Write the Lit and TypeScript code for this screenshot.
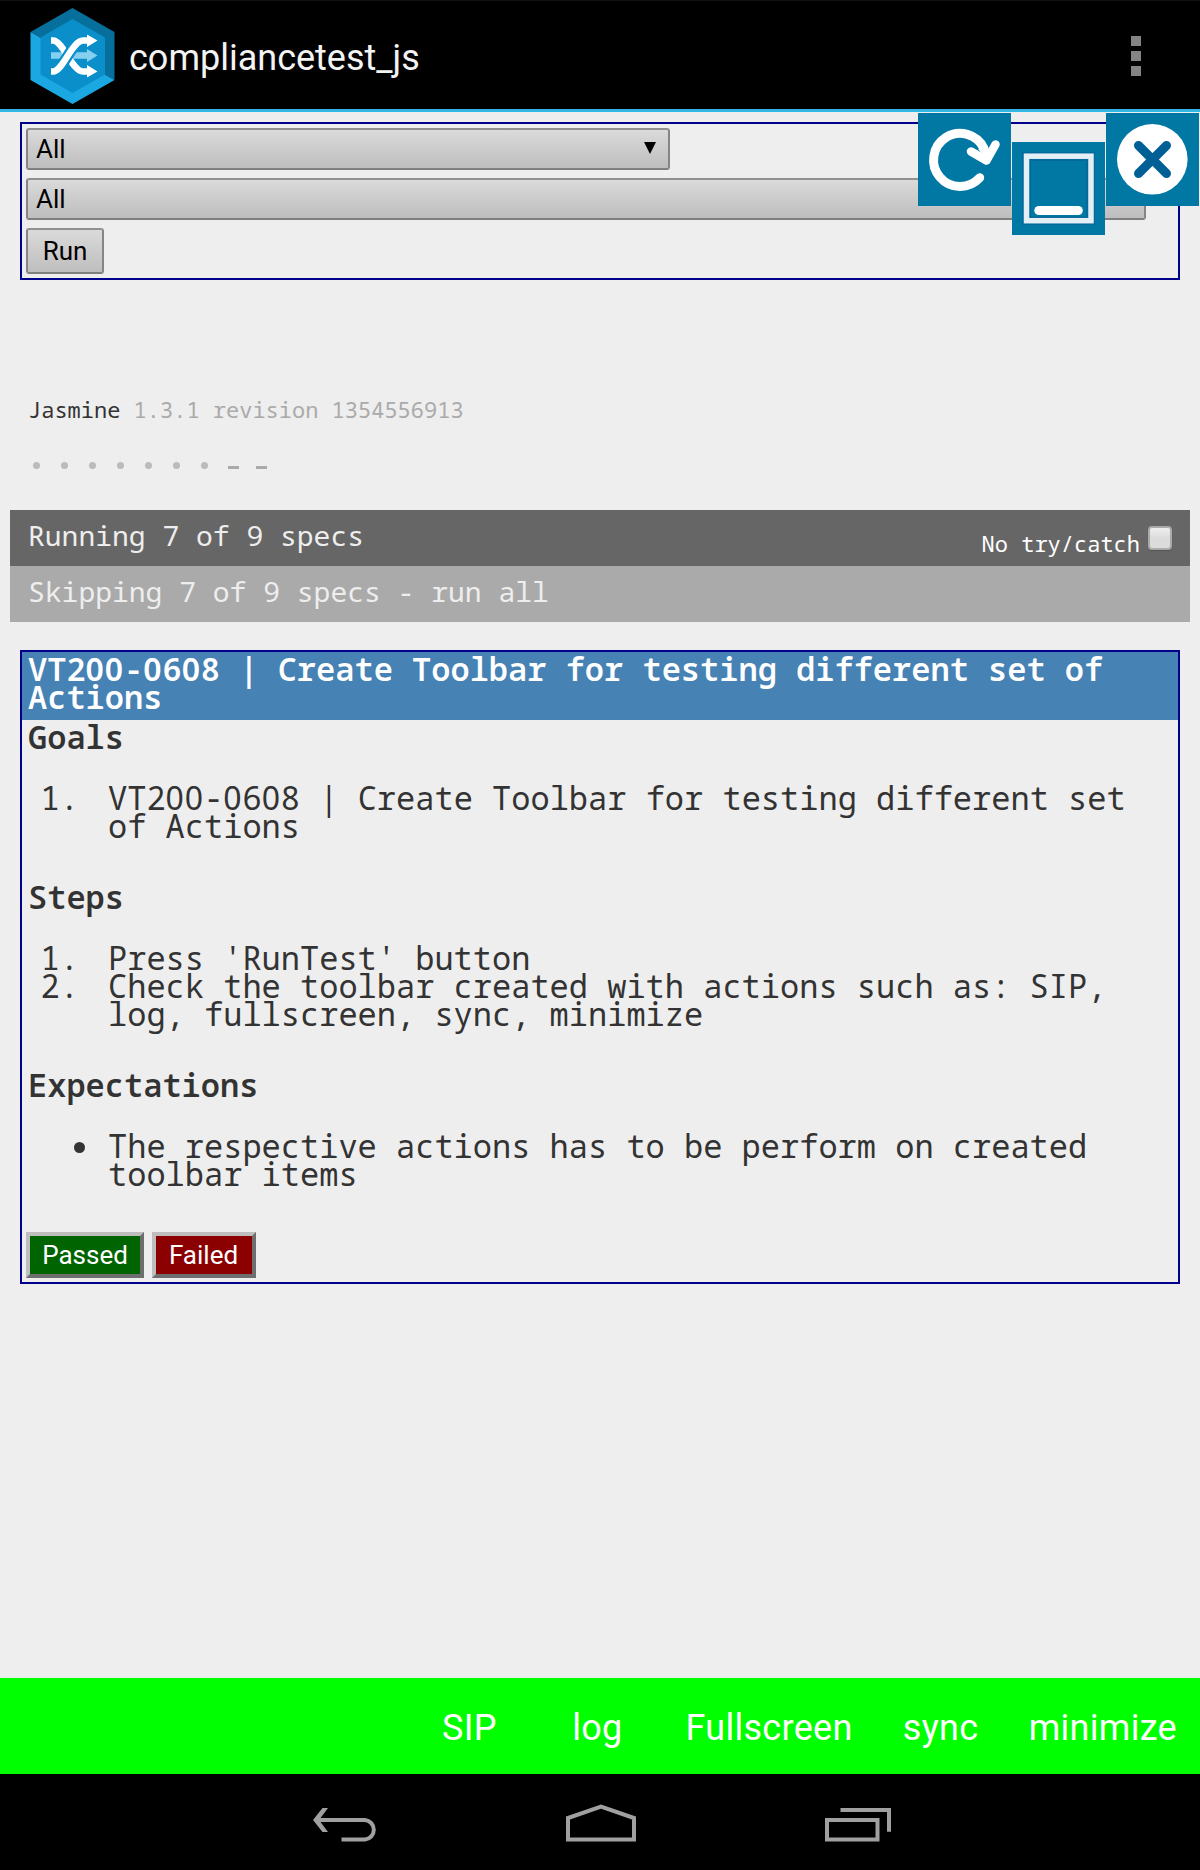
import { LitElement, html, css, svg } from "lit";
import { customElement } from "lit/decorators.js";

const TOOLBAR = ["SIP", "log", "Fullscreen", "sync", "minimize"];

/** Swaps the slashed zero of the mono face for a plain one of equal width. */
const mono = (text: string) =>
  text.split(/(0+)/).map((part) => (part.startsWith("0") ? html`<span class="zero">${part}</span>` : part));

const logo = svg`
  <polygon points="41.5,0 83.5,24 83.5,72 41.5,48 -0.5,24" fill="#066f9c"/>
  <polygon points="-0.5,24 41.5,48 83.5,72 41.5,96 -0.5,72" fill="#1ba8e2"/>
  <polygon points="41.5,11 74,29.5 74,66.5 41.5,85 9.5,66.5 9.5,29.5" fill="#0a8fca"/>
  <path d="M20 47.5h37" stroke="#85cff0" stroke-width="6.500"/>
  <path d="M56 41l10.500 6.500L56 54z" fill="#85cff0"/>
  <path d="M20 32.500h2c10 0 19 31 30 31h5" stroke="#fff" stroke-width="6.500" fill="none"/>
  <path d="M22 63.500c10 0 19-31 30-31" stroke="#0a8fca" stroke-width="11" fill="none"/>
  <path d="M20 63.500h2c10 0 19-31 30-31h5" stroke="#fff" stroke-width="6.500" fill="none"/>
  <path d="M56 26.500l10.500 6L56 39zM56 57l10.500 6.500L56 69.500z" fill="#fff"/>`;

@customElement("app-root")
export class AppRoot extends LitElement {
  static styles = css`
    :host {
      display: flex;
      flex-direction: column;
      position: relative;
      width: 1200px;
      height: 1870px;
      overflow: hidden;
      background: #eee;
      color: #333;
      font-family: "Noto Sans Mono", "DejaVu Sans Mono", monospace;
    }
    * { box-sizing: border-box; }
    svg { display: block; }
    .header {
      flex: none;
      display: flex;
      height: 112px;
      padding: 7px 59px 0 31px;
      background: #000;
      border-bottom: 3px solid #33b5e5;
      border-top: 1px solid #111;
    }
    .logo { overflow: visible; }
    .title {
      flex: 1;
      margin-left: 15px;
      color: #f3f3f3;
      font: 36px/100px Roboto, sans-serif;
    }
    .dots { display: flex; flex-direction: column; gap: 5px; padding-top: 28px; }
    .dots i { width: 10px; height: 10px; background: #848484; }
    .content { flex: 1; display: flex; flex-direction: column; padding: 10px 20px 0; }
    .filters {
      flex: none;
      display: flex;
      flex-direction: column;
      align-items: flex-start;
      height: 158px;
      padding: 4px;
      border: 2px solid #00008b;
      font-family: Roboto, sans-serif;
      font-size: 26px;
      color: #000;
    }
    .control {
      flex: none;
      display: flex;
      align-items: center;
      justify-content: space-between;
      height: 42px;
      margin-bottom: 8px;
      padding: 0 12px 0 8px;
      border: 2px solid;
      border-color: #909090 #858585 #7f7f7f;
      border-radius: 3px;
      background: linear-gradient(#dadada, #bebebe);
    }
    .short { width: 644px; }
    .long { width: 1120px; }
    .run { width: 78px; height: 46px; padding: 0; justify-content: center; }
    .arrow { margin-bottom: 3px; }
    .banner { margin: 114px 0 0 8px; font-size: 22px; line-height: 30px; white-space: pre; }
    .version { color: #aaa; }
    .results { display: flex; align-items: center; gap: 21px; height: 10px; margin: 36px 0 0 13px; }
    .ran { width: 7px; height: 7px; border-radius: 50%; background: #bbb; }
    .skipped { width: 11px; height: 3px; background: #aaa; margin-top: 5px; }
    .skipped + .skipped { margin-left: -4px; }
    .ran + .skipped { margin-left: -1px; }
    .bar {
      display: flex;
      justify-content: space-between;
      height: 56px;
      margin: 0 -10px;
      padding: 0 18px;
      background: #666;
      color: #eee;
      font-size: 28px;
      line-height: 50px;
    }
    .first { margin-top: 40px; }
    .skip { background: #aaa; }
    .catch { display: flex; color: #fff; font-size: 22px; line-height: 66px; }
    .check {
      width: 24px;
      height: 24px;
      margin: 16px 0 0 8px;
      border: 2px solid #aaa;
      border-radius: 4px;
      background: linear-gradient(#eee, #dcdcdc 50%);
      box-shadow: 0 1px 1px #555;
    }
    .card {
      display: flex;
      flex-direction: column;
      height: 634px;
      margin-top: 28px;
      border: 2px solid #00008b;
      font-size: 32px;
      line-height: 28px;
    }
    .name { height: 68px; padding: 3px 6px 0; background: #4682b4; color: #fff; font-weight: 600; }
    .section { padding: 0 6px 43px; }
    .name + .section { padding-top: 3px; }
    .head { font-weight: 600; margin-bottom: 33px; }
    .item { display: flex; }
    .mark { flex: none; width: 80px; padding-left: 12.500px; }
    .bullet { display: block; width: 11px; height: 11px; margin: 10px 0 0 45.500px; border-radius: 50%; background: #333; }
    .unordered { padding-left: 0; }
    .zero { font-family: "Noto Sans", sans-serif; letter-spacing: 0.028em; }
    .verdicts { display: flex; gap: 8px; padding-left: 4px; margin-top: 1px; }
    .verdict {
      width: 118px;
      height: 46px;
      border: 4px solid;
      border-color: #bebebe #6e6e6e #6e6e6e #bebebe;
      background: #006400;
      color: #fff;
      text-align: center;
      font: 26px/38px Roboto, sans-serif;
    }
    .failed { width: 104px; padding-right: 1px; background: #8b0000; }
    .overlay { position: absolute; top: 113px; right: 1px; display: flex; gap: 1px; }
    .tile { width: 93px; height: 93px; background: #0078a3; }
    .low { margin-top: 29px; }
    .toolbar {
      flex: none;
      display: flex;
      justify-content: flex-end;
      height: 96px;
      background: #0f0;
      color: #fff;
      font: 36px/100px Roboto, sans-serif;
      letter-spacing: 0.3px;
    }
    .action { min-width: 128px; padding: 0 24px; text-align: center; }
    .action:last-child { padding: 0 23px 0 24px; }
    .nav {
      flex: none;
      display: flex;
      justify-content: center;
      gap: 189px;
      height: 96px;
      padding: 29px 0 0 3px;
      background: #000;
    }
  `;

  private item(marker: string, text: unknown) {
    return html`<div class="item"><span class="mark">${marker}</span><span>${text}</span></div>`;
  }

  render() {
    return html`
      <div class="header">
        <svg class="logo" width="83" height="96" viewBox="0 0 83 96">${logo}</svg>
        <div class="title">compliancetest_js</div>
        <div class="dots"><i></i><i></i><i></i></div>
      </div>
      <div class="content">
        <div class="filters">
          <div class="control short">
            <span>All</span>
            <svg class="arrow" width="12" height="12"><path d="M0 0h12L6 12z"/></svg>
          </div>
          <div class="control long">All</div>
          <div class="control run">Run</div>
        </div>
        <div class="banner">Jasmine <span class="version">1.3.1 revision 1354556913</span></div>
        <div class="results">
          ${Array.from({ length: 7 }, () => html`<i class="ran"></i>`)}
          <i class="skipped"></i><i class="skipped"></i>
        </div>
        <div class="bar first">
          <span>Running 7 of 9 specs</span>
          <span class="catch">No try/catch<i class="check"></i></span>
        </div>
        <div class="bar skip">Skipping 7 of 9 specs - run all</div>
        <div class="card">
          <div class="name">${mono("VT200-0608 | Create Toolbar for testing different set of Actions")}</div>
          <div class="section">
            <div class="head">Goals</div>
            ${this.item("1.", mono("VT200-0608 | Create Toolbar for testing different set of Actions"))}
          </div>
          <div class="section">
            <div class="head">Steps</div>
            ${this.item("1.", "Press 'RunTest' button")}
            ${this.item("2.", "Check the toolbar created with actions such as: SIP, log, fullscreen, sync, minimize")}
          </div>
          <div class="section">
            <div class="head">Expectations</div>
            <div class="item">
              <span class="mark unordered"><i class="bullet"></i></span>
              <span>The respective actions has to be perform on created toolbar items</span>
            </div>
          </div>
          <div class="verdicts">
            <div class="verdict">Passed</div>
            <div class="verdict failed">Failed</div>
          </div>
        </div>
      </div>
      <div class="toolbar">${TOOLBAR.map((label) => html`<span class="action">${label}</span>`)}</div>
      <div class="nav">
        <svg width="64" height="40" fill="none" stroke="#a0a0a0" stroke-width="4">
          <path d="M28.500 36.500H52a9.800 9.800 0 0 0 0-19.500H4"/>
          <path d="M9.500 5h5.500L6 17l9 12H9.500L0 17z" fill="#a0a0a0" stroke="none"/>
        </svg>
        <svg width="70" height="40" fill="none" stroke="#a0a0a0" stroke-width="4">
          <path d="M2 36.500V15L35 3.500 68 15V36.500z"/>
        </svg>
        <svg width="66" height="40" fill="none" stroke="#a0a0a0" stroke-width="4">
          <path d="M2 17h50.500v19.500H2zM15.500 7H64v21.800"/>
        </svg>
      </div>
      <div class="overlay">
        <svg class="tile" viewBox="0 0 93 93" fill="none" stroke="#fff" stroke-width="9" stroke-linecap="round" stroke-linejoin="round">
          <path d="M61.700 64.700A26.500 26.500 0 1 1 66 35.500"/>
          <path d="M53 38.500L68.500 47.500 77.500 31.500" stroke-width="8.500"/>
          <path d="M60 36l9 10 6-10z" fill="#fff" stroke="none"/>
        </svg>
        <svg class="tile low" viewBox="0 0 93 93">
          <rect x="14.500" y="14.500" width="64" height="64" fill="none" stroke="#04619a" stroke-width="9" opacity=".6"/>
          <rect x="14.500" y="14.200" width="64.500" height="64.500" fill="none" stroke="#e3eff5" stroke-width="5.500"/>
          <rect x="22.300" y="64" width="48.500" height="9" rx="4.500" fill="#fff"/>
        </svg>
        <svg class="tile" viewBox="0 0 93 93">
          <circle cx="46.300" cy="46.300" r="35.300" fill="#fff"/>
          <path d="M32.500 32.500L60.500 60.500M60.500 32.500L32.500 60.500" stroke="#005f94" stroke-width="9" stroke-linecap="round"/>
        </svg>
      </div>
    `;
  }
}
